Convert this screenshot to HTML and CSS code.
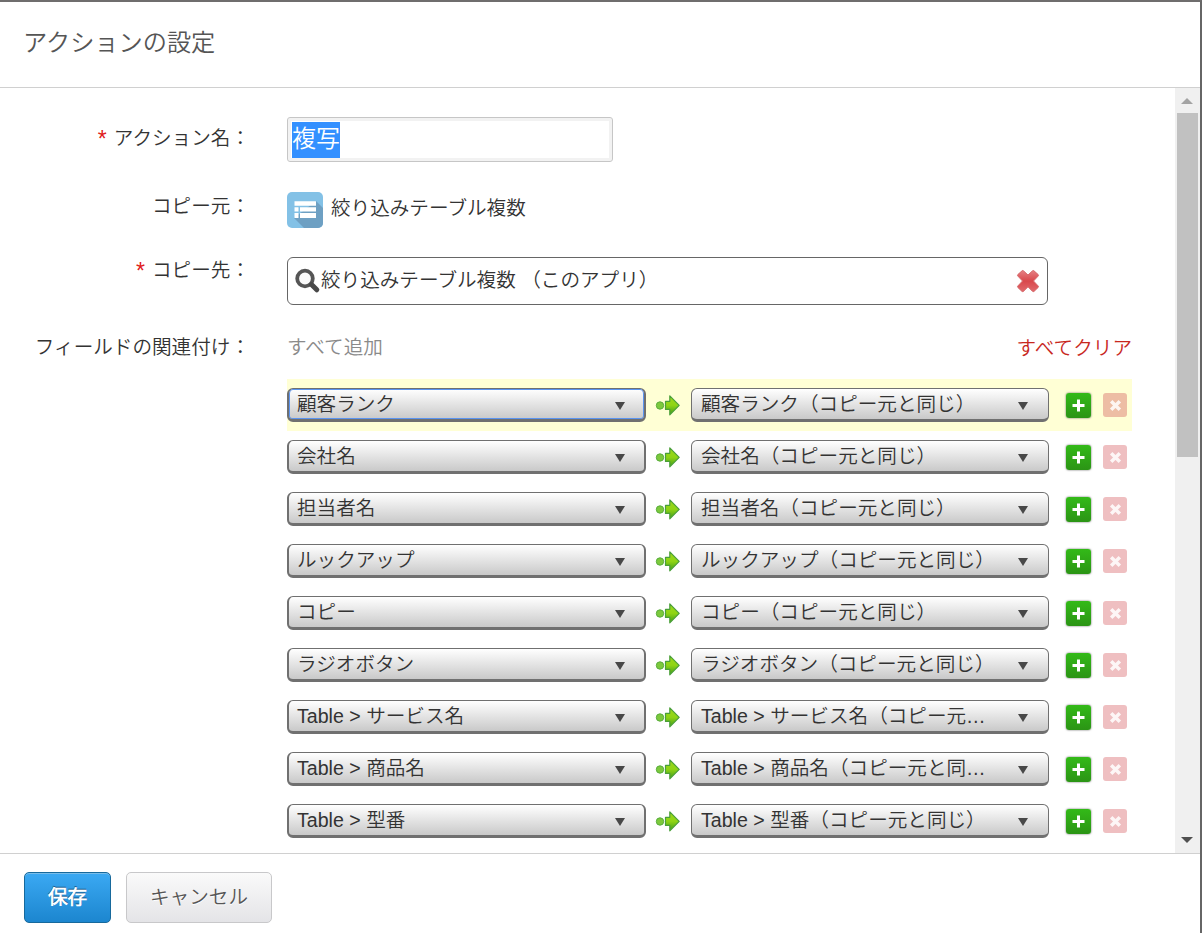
FILE: index.html
```html
<!DOCTYPE html>
<html lang="ja">
<head>
<meta charset="utf-8">
<title>アクションの設定</title>
<link rel="stylesheet" href="styles.css">
</head>
<body>
<svg class="defs" width="0" height="0">
  <defs>
    <linearGradient id="green" x1="0" y1="0" x2="0" y2="1"><stop offset="0" stop-color="#9bd81c"/><stop offset=".5" stop-color="#8fd414"/><stop offset="1" stop-color="#3f9c1c"/></linearGradient>
    <linearGradient id="red" x1="0" y1="0" x2="0" y2="1"><stop offset="0" stop-color="#e58083"/><stop offset=".5" stop-color="#d9484c"/><stop offset="1" stop-color="#e06a6d"/></linearGradient>
    <symbol id="arrow" viewBox="0 0 26 24">
      <circle cx="5" cy="12.500" r="3.700" fill="#7cc93c" stroke="#58ad3c"/>
      <path d="M10.500 8.300h4.300V2.800l9.400 9.600-9.400 9.400v-5.400h-4.300z" fill="url(#green)" stroke="#4a9f3a" stroke-width="1.200" stroke-linejoin="round"/>
    </symbol>
    <symbol id="plus" viewBox="0 0 13 13"><path d="M6.500 .5v12M.5 6.500h12" stroke="#fff" stroke-width="3"/></symbol>
    <symbol id="cross" viewBox="0 0 12 12"><path d="M2 2l8 8M10 2l-8 8" stroke="#fff" stroke-opacity=".85" stroke-width="3.200"/></symbol>
  </defs>
</svg>
<div class="dialog">
  <header class="header">アクションの設定</header>
  <div class="body">
    <div class="form">
      <div class="row name"><div class="label"><span class="req">*</span>アクション名<span class="colon">：</span></div>
        <div class="input"><span class="selected">複写</span></div></div>
      <div class="row source"><div class="label">コピー元<span class="colon">：</span></div>
        <div class="app">
          <svg width="36" height="36" viewBox="0 0 36 36"><rect width="36" height="36" rx="5" fill="#83c1e6"/><path d="M29 9l7 7v15a5 5 0 0 1-5 5H17L7 26z" fill="#6ea0c3"/><path d="M7.500 9.200h21.500v4.600H7.500zM7.500 15.200h4v4.300h-4zM13 15.200h16v4.300H13zM7.500 21h4v5h-4zM13 21h16v5H13z" fill="#fff"/></svg>
          <span>絞り込みテーブル複数</span></div></div>
      <div class="row target"><div class="label"><span class="req">*</span>コピー先<span class="colon">：</span></div>
        <div class="lookup">
          <svg width="26" height="26" viewBox="0 0 26 26"><circle cx="10" cy="10.500" r="7.800" fill="#fafafa" stroke="#555" stroke-width="3.800"/><path d="M16.500 16.500l5.300 5.300" stroke="#484848" stroke-width="5" stroke-linecap="round"/></svg>
          <span class="grow">絞り込みテーブル複数 （このアプリ）</span>
          <svg width="24" height="24" viewBox="0 0 24 24"><path d="M6.300 1.600Q7 1.300 7.700 2L12 6l4.300-4q.7-.7 1.400-.4l4.500 4q.6.700 0 1.400L17.500 12l4.700 5q.6.700 0 1.400l-4.200 4q-.7.500-1.400 0L12 17.800l-4.600 4.600q-.7.500-1.400 0l-4.200-4q-.6-.7 0-1.400l4.700-5-4.700-5q-.6-.7 0-1.400z" fill="url(#red)" stroke="#d76a6c" stroke-linejoin="round"/></svg>
        </div></div>
      <div class="row fields"><div class="label">フィールドの関連付け<span class="colon">：</span></div>
        <div class="mapping">
          <div class="links"><span class="add">すべて追加</span><span class="clear">すべてクリア</span></div>
          <div class="pairs" id="pairs"></div>
        </div></div>
    </div>
    <div class="scrollbar"><i class="up"></i><div class="thumb"></div><i class="down"></i></div>
  </div>
  <footer class="footer"><button class="btn save">保存</button><button class="btn cancel">キャンセル</button></footer>
</div>
<script src="app.js"></script>
</body>
</html>
```
FILE: styles.css
```css
* { box-sizing: border-box; }
body { margin: 0; background: #fff; color: #333; font: 350 19.6px/30px "Liberation Sans", "Noto Sans CJK JP DemiLight", "Noto Sans CJK JP", sans-serif; }
.defs { position: absolute; }
svg { display: block; flex: none; }
.dialog { width: 1202px; height: 933px; border-top: 2px solid #6f6d6d; border-right: 2px solid #666; display: flex; flex-direction: column; overflow: hidden; white-space: nowrap; }
.header { flex: none; height: 86px; border-bottom: 1px solid #d0d0d0; padding: 22px 23px; font-size: 24.2px; line-height: 37px; color: #555; }
.body { flex: none; height: 765px; display: flex; overflow: hidden; }
.form { flex: 1; padding-top: 29px; }
.row { display: grid; grid-template-columns: 250px 1fr; column-gap: 37px; align-items: start; }
.label { text-align: right; }
.colon { display: inline-block; }
.req { color: #e02020; margin-right: 7px; font-size: 23px; line-height: 20px; vertical-align: -2px; }
.name { height: 75px; }
.name .label { padding-top: 6px; }
.input { width: 326px; height: 45px; border: 1px solid #c6c6c6; border-radius: 3px; box-shadow: inset 0 0 0 3px #f2f2f2; padding: 4px; font-size: 24px; line-height: 33px; }
.selected { display: block; width: 48px; height: 36px; background: #3390ff; color: #fff; }
.source { height: 65px; }
.source .label { margin-top: -1px; }
.app { display: flex; gap: 8px; }
.app span { padding-top: 1px; }
.target { height: 75px; }
.target .label { margin-top: -2px; }
.lookup { width: 761px; height: 48px; border: 1px solid #666; border-radius: 6px; display: flex; align-items: center; padding: 0 7px; }
.grow { flex: 1; padding-bottom: 3px; }
.links { width: 845px; height: 47px; display: flex; justify-content: space-between; }
.add { color: #8a8a8a; }
.clear { color: #c8281e; padding-top: 1px; }
.pair { width: 845px; height: 52px; display: flex; align-items: center; }
.pair.active { background: #ffffd5; }
.select { width: 359px; height: 34px; border: 1px solid #707070; border-width: 1px 2px 3px; border-radius: 6px; background: linear-gradient(#fff, #c9c9c9); display: flex; align-items: center; padding: 0 19px 0 8px; }
.select.to { width: 358px; border-width: 1px 1px 3px; padding: 0 20px 0 9px; }
.active .from { box-shadow: inset 0 0 0 1px #5b94f0; }
.select span { width: 300px; }
.select i { margin: 4px 0 0 auto; border: 5px solid transparent; border-top: 8px solid #484848; border-bottom: 0; }
.arrow { width: 26px; height: 24px; margin: 0 10px 0 9px; }
.mini { width: 25px; height: 25px; margin-left: 17px; border-radius: 3px; background: linear-gradient(#33ba18, #2b9415); box-shadow: 0 0 2px #555; display: grid; place-items: center; }
.mini svg { width: 13px; height: 13px; }
.mini.remove { width: 24px; height: 24px; margin-left: 12px; background: #efbfc1; box-shadow: none; }
.active .remove { background: #edbda4; }
.scrollbar { width: 25px; background: #f0f0f0; display: flex; flex-direction: column; align-items: center; padding: 10px 1px 10px 0; }
.up, .down { border: 6px solid transparent; }
.up { border-top: 0; border-bottom-color: #a3a3a3; }
.down { border-bottom: 0; border-top-color: #505050; margin-top: auto; }
.thumb { width: 21px; height: 344px; margin: 9px 0 0 1px; background: #c1c1c1; }
.footer { flex: none; border-top: 1px solid #d0d0d0; padding: 18px 24px 0; display: flex; gap: 15px; }
.btn { height: 51px; border-radius: 5px; padding: 0 0 2px; font: inherit; }
.save { width: 87px; border: 1px solid #17699c; background: linear-gradient(#3ba9f3, #1c86cf); box-shadow: inset 0 1px #79bde9; color: #fff; font-weight: 700; text-shadow: 0 -1px #17578a; }
.cancel { width: 146px; border: 1px solid #c8c8ca; background: linear-gradient(#fafafa, #e4e4e7); color: #555; text-shadow: 0 1px #fff; }
```
FILE: app.js
```js
const rows = [
  ["顧客ランク", "顧客ランク（コピー元と同じ）"],
  ["会社名", "会社名（コピー元と同じ）"],
  ["担当者名", "担当者名（コピー元と同じ）"],
  ["ルックアップ", "ルックアップ（コピー元と同じ）"],
  ["コピー", "コピー（コピー元と同じ）"],
  ["ラジオボタン", "ラジオボタン（コピー元と同じ）"],
  ["Table > サービス名", "Table > サービス名（コピー元…"],
  ["Table > 商品名", "Table > 商品名（コピー元と同…"],
  ["Table > 型番", "Table > 型番（コピー元と同じ）"]
];
document.getElementById("pairs").innerHTML = rows.map(([from, to], i) => `
  <div class="pair${i ? "" : " active"}">
    <div class="select from"><span>${from}</span><i></i></div>
    <svg class="arrow"><use href="#arrow"/></svg>
    <div class="select to"><span>${to}</span><i></i></div>
    <div class="mini"><svg><use href="#plus"/></svg></div>
    <div class="mini remove"><svg><use href="#cross"/></svg></div>
  </div>`).join("");
```
